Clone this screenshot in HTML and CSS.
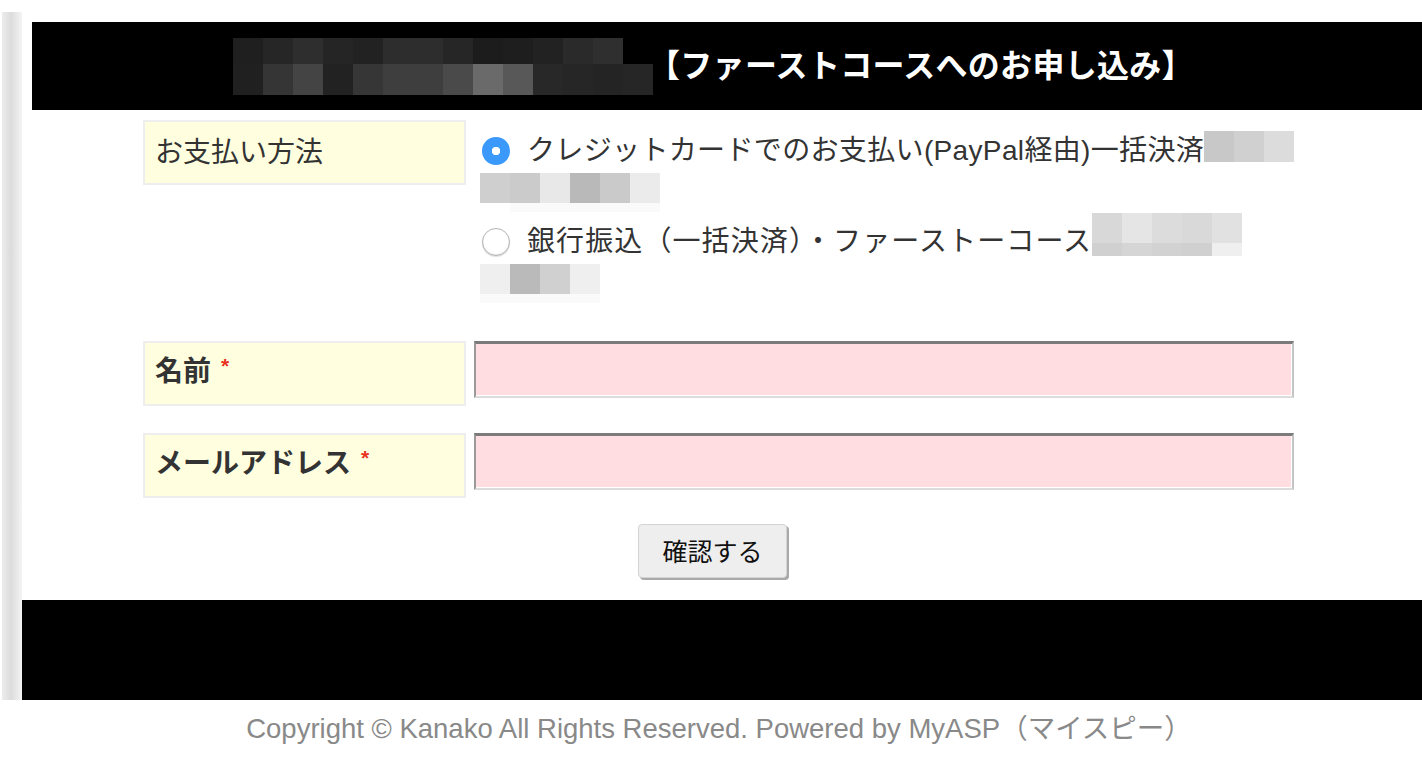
FILE: index.html
```html
<!DOCTYPE html>
<html lang="ja">
<head>
<meta charset="utf-8">
<title>ファーストコースへのお申し込み</title>
<link rel="stylesheet" href="styles.css">
</head>
<body>
<div class="page">
  <div class="rail"></div>
  <div class="main">
    <header class="head">
      <div class="head-blur"><div class="hb-top"></div><div class="hb-bot"></div></div>
      <h1 class="title">【ファーストコースへのお申し込み】</h1>
    </header>
    <form class="form">
      <div class="grid">
        <div class="label">お支払い方法</div>
        <div class="options">
          <div class="opt">
            <div class="opt-line">
              <input type="radio" class="radio" name="pay" checked>
              <span class="opt-text t1">クレジットカードでのお支払い(PayPal経由)一括決済</span>
              <span class="blur tail1"></span>
            </div>
            <div class="blur under1"></div>
          </div>
          <div class="opt">
            <div class="opt-line">
              <input type="radio" class="radio" name="pay">
              <span class="opt-text t2">銀行振込（一括決済）・ファーストーコース</span>
              <span class="blur tail2"></span>
            </div>
            <div class="blur under2"></div>
          </div>
        </div>
        <div class="label strong">名前<span class="req">*</span></div>
        <input class="field" type="text">
        <div class="label strong">メールアドレス<span class="req">*</span></div>
        <input class="field" type="text">
      </div>
      <div class="actions"><button type="button" class="btn">確認する</button></div>
    </form>
    <footer class="foot"></footer>
  </div>
</div>
<p class="copy">Copyright © Kanako All Rights Reserved. Powered by MyASP（マイスピー）</p>
</body>
</html>
```

FILE: styles.css
```css
html, body {
  margin: 0;
  padding: 0;
  background: #fff;
}
body {
  font-family: "Liberation Sans", "Noto Sans CJK JP", sans-serif;
  color: #333;
}
.page {
  display: flex;
  padding-top: 12px;
}
.rail {
  width: 20px;
  margin-left: 2px;
  flex: none;
  background: linear-gradient(to right, #ececec, #dcdcdc 45%, #f4f4f4);
}
.main {
  flex: 1;
  padding-top: 10px;
}
.head {
  margin-left: 10px;
  height: 88px;
  background: #000;
  display: flex;
  align-items: center;
  padding-left: 201px;
}
.head-blur {
  width: 420px;
  height: 57px;
  flex: none;
}
.hb-top {
  width: 390px;
  height: 26px;
  background: linear-gradient(to right,
    #1f1f1f 0 30px, #262626 30px 60px, #2e2e2e 60px 90px, #252525 90px 120px,
    #222 120px 150px, #2d2d2d 150px 180px, #2d2d2d 180px 210px, #262626 210px 240px,
    #1c1c1c 240px 270px, #1e1e1e 270px 300px, #222 300px 330px, #2a2a2a 330px 360px,
    #2f2f2f 360px 390px);
}
.hb-bot {
  width: 420px;
  height: 31px;
  background: linear-gradient(to right,
    #202020 0 30px, #353535 30px 60px, #444 60px 90px, #222 90px 120px,
    #363636 120px 150px, #3e3e3e 150px 180px, #3e3e3e 180px 210px, #4a4a4a 210px 240px,
    #6a6a6a 240px 270px, #585858 270px 300px, #282828 300px 330px, #262626 330px 360px,
    #242424 360px 390px, #262626 390px 420px);
}
.title {
  margin: 0 0 0 -5px;
  font-size: 32px;
  font-weight: bold;
  color: #fff;
  line-height: 40px;
  letter-spacing: 0.3px;
}
.form {
  margin: 10px 0 0 121px;
  width: 1151px;
}
.grid {
  display: grid;
  grid-template-columns: 323px 820px;
  column-gap: 8px;
  row-gap: 27px;
  align-items: start;
}
.label {
  box-sizing: border-box;
  height: 65px;
  background: #ffffe0;
  border: 2px solid #eee;
  padding: 0 10px;
  font-size: 28px;
  line-height: 61px;
  color: #333;
}
.label.strong {
  font-weight: bold;
  line-height: 57px;
}
.req {
  color: #e8321e;
  font-size: 21px;
  font-weight: bold;
  margin-left: 10px;
  line-height: 0;
  vertical-align: 8px;
}
.options {
  padding: 11px 0 11px 8px;
}
.opt + .opt {
  margin-top: 10px;
}
.opt-line {
  display: flex;
  align-items: center;
  height: 40px;
}
.radio {
  appearance: none;
  -webkit-appearance: none;
  margin: 0 17px 0 0;
  width: 28px;
  height: 28px;
  border-radius: 50%;
  box-sizing: border-box;
  flex: none;
  background: #fff;
  border: 1px solid #b3b3b3;
  box-shadow: inset 0 -1px 1px rgba(0,0,0,0.08), 0 1px 1px rgba(0,0,0,0.12);
}
.radio:checked {
  border: none;
  background: radial-gradient(circle, #fff 0 4px, #3b99fc 4.5px);
  box-shadow: none;
}
.opt-text {
  font-size: 28px;
  line-height: 40px;
  color: #333;
  white-space: nowrap;
}
.t1 {
  letter-spacing: 0.35px;
}
.t2 {
  letter-spacing: 1.1px;
}
.blur {
  display: block;
  flex: none;
}
.tail1 {
  align-self: flex-start;
  width: 90px;
  height: 31px;
  background: linear-gradient(to right, #c8c8c8 0 30px, #d0d0d0 30px 60px, #dcdcdc 60px 90px);
}
.tail2 {
  align-self: flex-start;
  margin-top: -9px;
  width: 150px;
  height: 43px;
  background:
    linear-gradient(to right, #d0d0d0 0 30px, #d5d5d5 30px 60px, #d2d2d2 60px 90px, #d0d0d0 90px 120px, #efefef 120px 150px) bottom / 100% 13px no-repeat,
    linear-gradient(to right, #d8d8d8 0 30px, #e5e5e5 30px 60px, #dcdcdc 60px 90px, #d9d9d9 90px 120px, #e1e1e1 120px 150px) top / 100% 30px no-repeat;
}
.under1 {
  margin: 2px 0 0 -2px;
  width: 180px;
  height: 39px;
  background:
    linear-gradient(to right, #fff 0 30px, #fafafa 30px 180px) bottom / 100% 9px no-repeat,
    linear-gradient(to right, #cfcfcf 0 30px, #cbcbcb 30px 60px, #e8e8e8 60px 90px, #b9b9b9 90px 120px, #cacaca 120px 150px, #ebebeb 150px 180px) top / 100% 30px no-repeat;
}
.under2 {
  margin: 2px 0 0 -2px;
  width: 120px;
  height: 39px;
  background:
    linear-gradient(to right, #fafafa 0 120px) bottom / 100% 9px no-repeat,
    linear-gradient(to right, #efefef 0 30px, #bababa 30px 60px, #d0d0d0 60px 90px, #efefef 90px 120px) top / 100% 30px no-repeat;
}
.field {
  display: block;
  box-sizing: border-box;
  width: 820px;
  height: 57px;
  margin: 0;
  background: #ffdde0;
  border-style: solid;
  border-width: 3px 2px 2px 2px;
  border-color: #7b7b7b #c4c4c4 #dcdcdc #9a9a9a;
  box-shadow: inset -1px -1px 0 #fff;
  outline: none;
}
.actions {
  margin-top: 26px;
  padding-left: 495px;
}
.btn {
  box-sizing: border-box;
  width: 149px;
  height: 54px;
  background: #eee;
  border: 1px solid #d4d4d4;
  border-radius: 4px;
  box-shadow: 2px 2px 0 #a9a9a9;
  font-family: "Noto Sans CJK JP", sans-serif;
  font-size: 25px;
  line-height: 50px;
  color: #111;
  padding: 0 0 2px;
  cursor: pointer;
}
.foot {
  margin-top: 22px;
  height: 100px;
  background: #000;
}
.copy {
  margin: 13px 0 0;
  text-align: center;
  padding-left: 16px;
  font-size: 27.5px;
  line-height: 32px;
  color: #898989;
}
```
